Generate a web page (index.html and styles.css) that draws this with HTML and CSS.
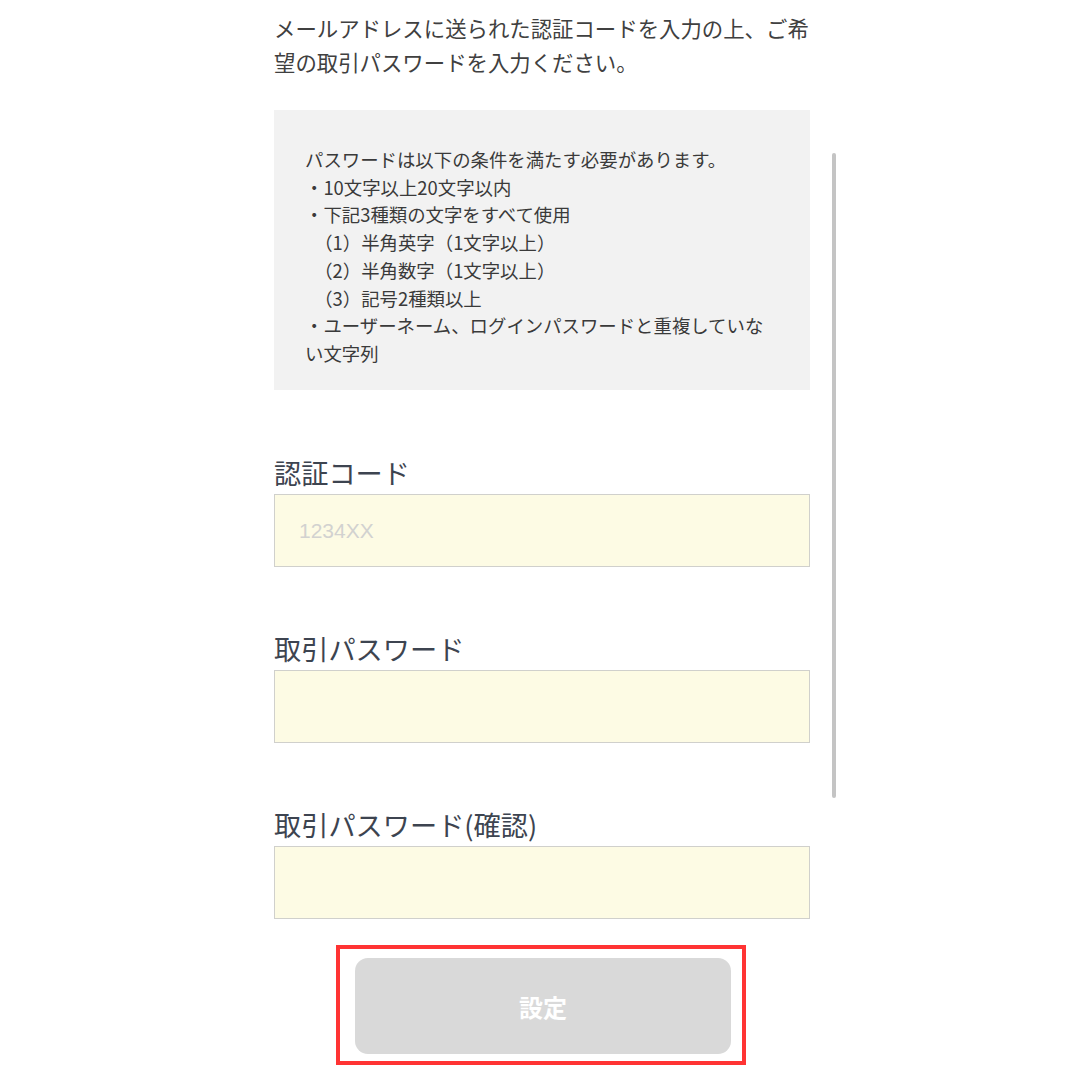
FILE: index.html
```html
<!DOCTYPE html>
<html lang="ja">
<head>
<meta charset="utf-8">
<title>取引パスワード設定</title>
<link rel="stylesheet" href="styles.css">
</head>
<body>
<div class="page">
  <p class="intro">メールアドレスに送られた認証コードを入力の上、ご希望の取引パスワードを入力ください。</p>
  <div class="rules">
    <div class="rule-line">パスワードは以下の条件を満たす必要があります。</div>
    <div class="rule-line">・10文字以上20文字以内</div>
    <div class="rule-line">・下記3種類の文字をすべて使用</div>
    <div class="rule-line">　（1）半角英字（1文字以上）</div>
    <div class="rule-line">　（2）半角数字（1文字以上）</div>
    <div class="rule-line">　（3）記号2種類以上</div>
    <div class="rule-line">・ユーザーネーム、ログインパスワードと重複していない文字列</div>
  </div>
  <div class="field">
    <label class="label">認証コード</label>
    <input class="input" type="text" placeholder="1234XX">
  </div>
  <div class="field">
    <label class="label">取引パスワード</label>
    <input class="input" type="password">
  </div>
  <div class="field">
    <label class="label">取引パスワード(確認)</label>
    <input class="input" type="password">
  </div>
  <div class="highlight">
    <button class="submit" type="button">設定</button>
  </div>
</div>
<div class="scrollbar"></div>
</body>
</html>
```

FILE: styles.css
```css
html, body {
  margin: 0;
  padding: 0;
  background: #ffffff;
}

body {
  font-family: "Noto Sans CJK JP", "Noto Sans", sans-serif;
  color: #3e3e3e;
}

.page {
  width: 536px;
  margin-left: 274px;
  display: flex;
  flex-direction: column;
}

.intro {
  margin: 11px 0 0 0;
  font-size: 21.4px;
  line-height: 34px;
  color: #404040;
}

.rules {
  margin-top: 31px;
  background: #f2f2f2;
  padding: 36px 40px 22px 31px;
  font-size: 18.4px;
  line-height: 27.7px;
  color: #3a3a3a;
  height: 222px;
}

.field {
  display: flex;
  flex-direction: column;
  gap: 4px;
  margin-top: 64px;
}

.field + .field {
  margin-top: 63px;
}

.label {
  font-size: 27.2px;
  line-height: 36px;
  color: #3d4450;
}

.input {
  box-sizing: border-box;
  height: 73px;
  width: 100%;
  margin: 0;
  padding: 0 24px;
  background: #fdfbe4;
  border: 1px solid #d0d0cc;
  border-radius: 0;
  font-family: "Liberation Sans", "Noto Sans CJK JP", sans-serif;
  font-size: 21px;
  color: #333;
  outline: none;
}

.input::placeholder {
  color: #d2d2d0;
}

.highlight {
  align-self: flex-start;
  margin: 26px 0 0 62px;
  width: 410px;
  box-sizing: border-box;
  border: 4px solid #ff3333;
  padding: 9px 11px 7px 15px;
}

.submit {
  display: block;
  width: 376px;
  height: 96px;
  border: none;
  border-radius: 13px;
  background: #d9d9d9;
  color: #ffffff;
  font-family: "Noto Sans CJK JP", sans-serif;
  font-size: 24px;
  font-weight: 700;
  padding: 0;
}

.scrollbar {
  position: absolute;
  left: 832px;
  top: 153px;
  width: 4px;
  height: 645px;
  border-radius: 2px;
  background: #c4c4c4;
}
```
